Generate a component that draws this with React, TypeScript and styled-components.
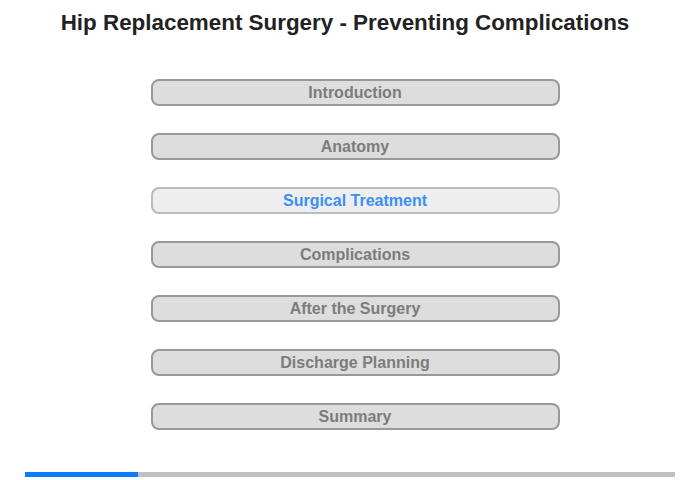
import React from "react"
import styled, {createGlobalStyle} from "styled-components";

const GlobalStyle = createGlobalStyle`
    html, body {
        margin: 0;
        padding: 0;
        background: #ffffff;
        font-family: "Liberation Sans", Arial, sans-serif;
    }
`

const Page = styled.div`
    width: 700px;
    height: 480px;
    display: flex;
    flex-direction: column;
    align-items: center;
    box-sizing: border-box;
    padding-top: 11px;
`

const Title = styled.h1`
    margin: 0 10px 0 0;
    font-size: 22.4px;
    line-height: 24px;
    font-weight: bold;
    color: #222222;
`

const Menu = styled.div`
    display: flex;
    flex-direction: column;
    gap: 27px;
    margin-top: 44px;
    margin-left: 10px;
`

const MenuButton = styled.div<{ $active?: boolean }>`
    width: 409px;
    height: 27px;
    box-sizing: border-box;
    border: 2px solid ${p => p.$active ? "#bbbbbb" : "#999999"};
    border-radius: 8px;
    background-color: ${p => p.$active ? "#eeeeee" : "#dddddd"};
    color: ${p => p.$active ? "#3a8ff5" : "#7c7c7c"};
    font-size: 16px;
    font-weight: bold;
    display: flex;
    align-items: center;
    justify-content: center;
    cursor: pointer;
`

const Progress = styled.div`
    width: 650px;
    height: 5px;
    margin-top: auto;
    margin-bottom: 3px;
    background-color: #c0c0c0;
    display: flex;
`

const ProgressFill = styled.div`
    height: 100%;
    background-color: #0a7cff;
`

const sections = [
    "Introduction",
    "Anatomy",
    "Surgical Treatment",
    "Complications",
    "After the Surgery",
    "Discharge Planning",
    "Summary",
]

const App: React.FC = () => {
    const current = 2
    const done = 113 / 650
    return (
        <Page>
            <GlobalStyle/>
            <Title>Hip Replacement Surgery - Preventing Complications</Title>
            <Menu>
                {sections.map((s, i) => (
                    <MenuButton key={s} $active={i === current}>{s}</MenuButton>
                ))}
            </Menu>
            <Progress>
                <ProgressFill style={{width: `${done * 100}%`}}/>
            </Progress>
        </Page>
    )
}
export default App;
